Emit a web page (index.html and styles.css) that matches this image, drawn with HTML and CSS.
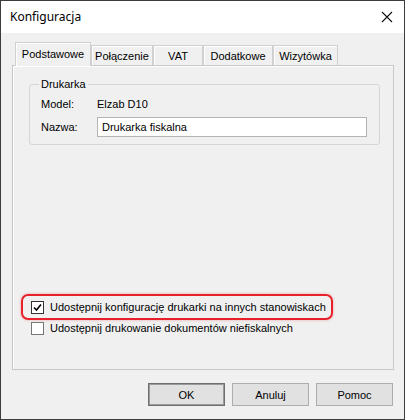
FILE: index.html
```html
<!doctype html>
<html lang="pl">

<head>
  <meta charset="UTF-8">
  <title>Konfiguracja</title>
  <link rel="stylesheet" href="styles.css">
</head>

<body>
  <div class="window">
    <!-- Title bar -->
    <div class="titlebar">
      <span class="title">Konfiguracja</span>
      <svg class="close" width="12" height="12" viewBox="0 0 12 12">
        <path d="M1 1 L11 11 M11 1 L1 11" stroke="#111" stroke-width="1.1" fill="none" />
      </svg>
    </div>

    <div class="content">
      <!-- Tabs -->
      <div class="tabs">
        <div class="tab active w1">Podstawowe</div>
        <div class="tab w2">Połączenie</div>
        <div class="tab w3">VAT</div>
        <div class="tab w4">Dodatkowe</div>
        <div class="tab w5">Wizytówka</div>
      </div>

      <div class="panel">
        <fieldset class="group">
          <legend>Drukarka</legend>
          <div class="row">
            <span class="label">Model:</span>
            <span class="value">Elzab D10</span>
          </div>
          <div class="row">
            <span class="label">Nazwa:</span>
            <div class="input">Drukarka fiskalna</div>
          </div>
        </fieldset>

        <div class="checks">
          <div class="check highlight">
            <span class="box checked">
              <svg width="9" height="9" viewBox="0 0 9 9">
                <path d="M1 4.5 L3.5 7 L8 1.5" stroke="#000" stroke-width="1.6" fill="none" />
              </svg>
            </span>
            <span>Udostępnij konfigurację drukarki na innych stanowiskach</span>
          </div>
          <div class="check plain">
            <span class="box"></span>
            <span>Udostępnij drukowanie dokumentów niefiskalnych</span>
          </div>
        </div>
      </div>

      <!-- Dialog buttons -->
      <div class="buttons">
        <div class="btn default">OK</div>
        <div class="btn">Anuluj</div>
        <div class="btn">Pomoc</div>
      </div>
    </div>
  </div>
</body>

</html>
```

FILE: styles.css
```css
html,
body {
  margin: 0;
  background: #fff;
}

body {
  font-family: "Liberation Sans", Arial, sans-serif;
  font-size: 11px;
  color: #000;
}

.window {
  width: 405px;
  height: 420px;
  box-sizing: border-box;
  border: 1px solid #3c3c3c;
  display: flex;
  flex-direction: column;
}

/* Title bar */

.titlebar {
  height: 32px;
  flex: none;
  background: #fff;
  display: flex;
  align-items: center;
  justify-content: space-between;
  padding: 0 11px 0 9px;
}

.title {
  font-family: "Noto Sans", "Liberation Sans", sans-serif;
  font-size: 12px;
  margin-top: -1px;
}

.content {
  flex: 1;
  background: #f0f0f0;
  display: flex;
  flex-direction: column;
  padding: 9px 10px 0 11px;
}

/* Tabs */

.tabs {
  display: flex;
  align-items: flex-end;
  height: 23px;
  padding-left: 3px;
  position: relative;
  z-index: 1;
}

.tab {
  height: 20px;
  box-sizing: border-box;
  border: 1px solid #d0d0d0;
  border-bottom: none;
  box-shadow: inset 1px 1px 0 #fff;
  background: #f0f0f0;
  display: flex;
  align-items: center;
  justify-content: center;
  margin-bottom: 0;
}

.tab.active {
  height: 24px;
  margin-bottom: -1px;
  padding-bottom: 1px;
}

.w1 { width: 76px; }
.w2 { width: 62px; }
.w3 { width: 50px; }
.w4 { width: 70px; }
.w5 { width: 65px; }

.panel {
  flex: 1;
  border: 1px solid #c8c8c8;
  box-shadow: inset 1px 1px 0 #fff;
  display: flex;
  flex-direction: column;
  padding: 0 13px 34px 16px;
}

/* Group box */

.group {
  margin: 12px 0 0 0;
  border: 1px solid #d5d5d5;
  border-radius: 3px;
  padding: 2px 0 13px 11px;
  height: 67px;
  box-sizing: border-box;
  min-width: 0;
}

.group legend {
  padding: 0 2px;
  margin-left: -2px;
}

.row {
  display: flex;
  align-items: center;
  height: 23px;
}

.label {
  width: 56px;
  flex: none;
}

.input {
  width: 270px;
  height: 20px;
  box-sizing: border-box;
  border: 1px solid #b4b4b4;
  background: #fff;
  display: flex;
  align-items: center;
  padding-left: 4px;
}

/* Checkboxes */

.checks {
  margin-top: auto;
  margin-left: -8px;
}

.check {
  display: flex;
  align-items: center;
  gap: 6px;
}

.check.highlight {
  width: 312px;
  height: 26px;
  box-sizing: border-box;
  border: 2px solid #e8202a;
  border-radius: 7px;
  padding-left: 8px;
  box-shadow: 0 0 3px rgba(232, 32, 42, 0.35);
}

.check.plain {
  height: 14px;
  padding-left: 10px;
  margin-top: 1px;
}

.box {
  width: 13px;
  height: 13px;
  box-sizing: border-box;
  border: 1px solid #333;
  background: #fff;
  display: flex;
  align-items: center;
  justify-content: center;
  flex: none;
}

.check.plain .box {
  border-color: #777;
}

/* Dialog buttons */

.buttons {
  height: 49px;
  flex: none;
  display: flex;
  justify-content: flex-end;
  align-items: center;
  gap: 7px;
  padding-right: 1px;
}

.btn {
  width: 77px;
  height: 23px;
  box-sizing: border-box;
  border: 1px solid #adadad;
  background: #e1e1e1;
  display: flex;
  align-items: center;
  justify-content: center;
}

.btn.default {
  border-color: #6f6f6f;
  box-shadow: inset 0 0 0 1px #9a9a9a;
}
```
